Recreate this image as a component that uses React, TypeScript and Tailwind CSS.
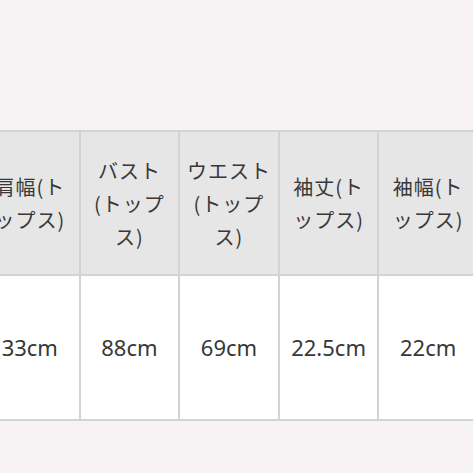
const headers = ['肩幅(トップス)', 'バスト(トップス)', 'ウエスト(トップス)', '袖丈(トップス)', '袖幅(トップス)'];
const values = ['33cm', '88cm', '69cm', '22.5cm', '22cm'];

export default function App() {
  return (
    <div className="h-[473px] w-[473px] overflow-hidden bg-[#f7f3f4] pt-[130px]">
      <table className="ml-[-21px] w-[500px] table-fixed border-collapse text-[#383838]">
        <tbody>
          <tr className="h-[144px] bg-[#e6e6e6]">
            {headers.map((h) => (
              <td
                key={h}
                className="border-2 border-[#d3d3d3] px-1 text-center align-middle text-[20px] leading-[33px] tracking-[1px]"
                style={{ fontFamily: '"Noto Sans CJK JP", sans-serif' }}
              >
                {h}
              </td>
            ))}
          </tr>
          <tr className="h-[145px] bg-white">
            {values.map((v) => (
              <td
                key={v}
                className="border-2 border-[#d3d3d3] px-2 text-center align-middle text-[22px]"
                style={{ fontFamily: '"Noto Sans", sans-serif' }}
              >
                {v}
              </td>
            ))}
          </tr>
        </tbody>
      </table>
    </div>
  );
}
